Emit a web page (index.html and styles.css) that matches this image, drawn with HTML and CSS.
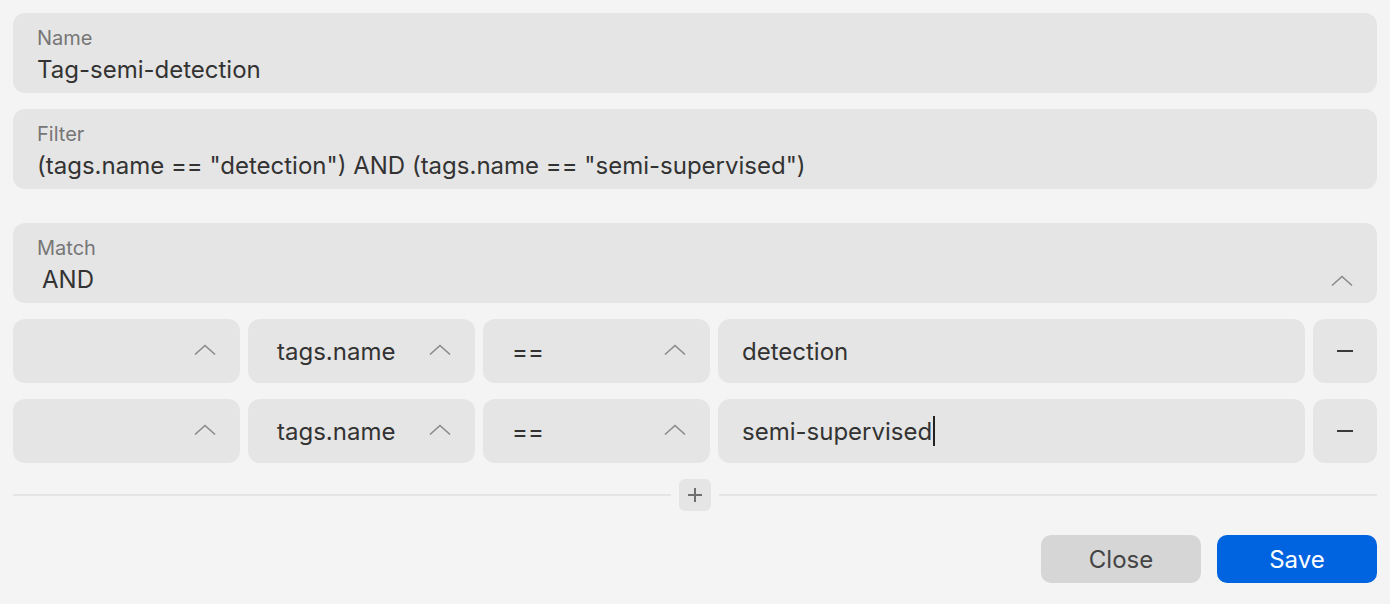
FILE: index.html
```html
<!DOCTYPE html>
<html>
<head>
<meta charset="utf-8">
<link rel="stylesheet" href="styles.css">
</head>
<body>
<div class="dialog">
  <div class="field">
    <div class="label">Name</div>
    <div class="value">Tag-semi-detection</div>
  </div>
  <div class="field">
    <div class="label">Filter</div>
    <div class="value">(tags.name == "detection") AND (tags.name == "semi-supervised")</div>
  </div>
  <div class="field match">
    <div class="label">Match</div>
    <div class="match-row">
      <div class="value select-value">AND</div>
      <svg class="chev" width="22" height="12" viewBox="0 0 22 12"><path d="M1 10.5 L11 1.5 L21 10.5" fill="none" stroke="#8a8a8a" stroke-width="1.6"/></svg>
    </div>
  </div>
  <div class="rules">
    <div class="rule">
      <div class="cell sel"><span></span><svg class="chev" width="22" height="12" viewBox="0 0 22 12"><path d="M1 10.5 L11 1.5 L21 10.5" fill="none" stroke="#8a8a8a" stroke-width="1.6"/></svg></div>
      <div class="cell sel"><span>tags.name</span><svg class="chev" width="22" height="12" viewBox="0 0 22 12"><path d="M1 10.5 L11 1.5 L21 10.5" fill="none" stroke="#8a8a8a" stroke-width="1.6"/></svg></div>
      <div class="cell sel"><span>==</span><svg class="chev" width="22" height="12" viewBox="0 0 22 12"><path d="M1 10.5 L11 1.5 L21 10.5" fill="none" stroke="#8a8a8a" stroke-width="1.6"/></svg></div>
      <div class="cell input"><span>detection</span></div>
      <div class="cell btn"><svg width="18" height="4" viewBox="0 0 18 4"><rect x="1" y="1" width="16" height="2" fill="#3a3a3a"/></svg></div>
    </div>
    <div class="rule">
      <div class="cell sel"><span></span><svg class="chev" width="22" height="12" viewBox="0 0 22 12"><path d="M1 10.5 L11 1.5 L21 10.5" fill="none" stroke="#8a8a8a" stroke-width="1.6"/></svg></div>
      <div class="cell sel"><span>tags.name</span><svg class="chev" width="22" height="12" viewBox="0 0 22 12"><path d="M1 10.5 L11 1.5 L21 10.5" fill="none" stroke="#8a8a8a" stroke-width="1.6"/></svg></div>
      <div class="cell sel"><span>==</span><svg class="chev" width="22" height="12" viewBox="0 0 22 12"><path d="M1 10.5 L11 1.5 L21 10.5" fill="none" stroke="#8a8a8a" stroke-width="1.6"/></svg></div>
      <div class="cell input"><span>semi-supervised</span><span class="caret"></span></div>
      <div class="cell btn"><svg width="18" height="4" viewBox="0 0 18 4"><rect x="1" y="1" width="16" height="2" fill="#3a3a3a"/></svg></div>
    </div>
  </div>
  <div class="divider">
    <div class="line"></div>
    <div class="add"><svg width="18" height="18" viewBox="0 0 18 18"><path d="M9 2 V16 M2 9 H16" stroke="#707070" stroke-width="2"/></svg></div>
    <div class="line"></div>
  </div>
  <div class="actions">
    <button class="b close">Close</button>
    <button class="b save">Save</button>
  </div>
</div>
</body>
</html>
```
FILE: styles.css
```css
html, body {
  margin: 0;
  padding: 0;
  background: #f4f4f4;
  font-family: Inter, "Noto Sans", sans-serif;
}
.dialog {
  padding: 13px 13px 0 13px;
  display: flex;
  flex-direction: column;
}
.field {
  background: #e5e5e5;
  border-radius: 12px;
  height: 80px;
  box-sizing: border-box;
  padding: 13px 24px 0 24px;
  margin-bottom: 16px;
}
.field.match {
  margin-top: 18px;
}
.label {
  font-size: 20px;
  color: #767676;
  line-height: 24px;
}
.value {
  font-size: 24px;
  color: #333;
  line-height: 32px;
  margin-top: 4px;
}
.match-row {
  display: flex;
  justify-content: space-between;
  align-items: center;
}
.match-row .value {
  margin-top: 4px;
}
.select-value {
  padding-left: 5px;
}
.match-row .chev {
  margin-top: 6px;
}
.rules {
  display: flex;
  flex-direction: column;
  gap: 16px;
}
.rule {
  display: grid;
  grid-template-columns: 227px 227px 227px 1fr 64px;
  gap: 8px;
}
.cell {
  background: #e5e5e5;
  border-radius: 12px;
  height: 64px;
  display: flex;
  align-items: center;
  font-size: 24px;
  color: #333;
  box-sizing: border-box;
}
.cell.sel {
  justify-content: space-between;
  padding: 0 24px 0 29px;
}
.cell.sel .chev {
  margin-top: -2px;
}
.cell.input {
  padding-left: 24px;
}
.caret {
  display: inline-block;
  width: 2px;
  height: 30px;
  background: #222;
  margin-left: 1px;
}
.cell.btn {
  justify-content: center;
}
.divider {
  display: flex;
  align-items: center;
  margin-top: 16px;
  gap: 8px;
}
.line {
  flex: 1;
  height: 2px;
  background: #e4e4e4;
}
.add {
  width: 32px;
  height: 32px;
  border-radius: 6px;
  background: #e5e5e5;
  display: flex;
  align-items: center;
  justify-content: center;
}
.actions {
  display: flex;
  justify-content: flex-end;
  gap: 16px;
  margin-top: 24px;
}
.b {
  width: 160px;
  height: 48px;
  border: none;
  border-radius: 10px;
  font-family: Inter, "Noto Sans", sans-serif;
  font-size: 24px;
  padding: 0;
}
.close {
  background: #d6d6d6;
  color: #444;
}
.save {
  background: #0064e1;
  color: #fff;
}
```
